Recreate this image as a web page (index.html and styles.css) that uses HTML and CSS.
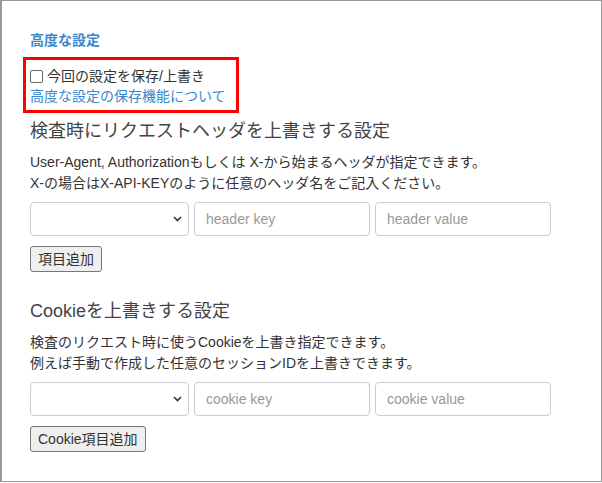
FILE: index.html
```html
<!DOCTYPE html>
<html lang="ja">
<head>
    <meta charset="UTF-8">
    <meta name="viewport" content="width=device-width, initial-scale=1.0">
    <title>高度な設定</title>
    <link rel="stylesheet" href="styles.css">
</head>
<body>

    <div class="panel">
        <div class="adv-title">高度な設定</div>

        <!-- save settings -->
        <div class="save-box">
            <label class="save-check"><input type="checkbox"> 今回の設定を保存/上書き</label>
            <a class="save-help" href="#">高度な設定の保存機能について</a>
        </div>

        <!-- header override -->
        <div class="override">
            <h3>検査時にリクエストヘッダを上書きする設定</h3>
            <p>User-Agent, Authorizationもしくは X-から始まるヘッダが指定できます。<br>X-の場合はX-API-KEYのように任意のヘッダ名をご記入ください。</p>
            <div class="kv-row">
                <div class="select-wrap">
                    <select></select>
                    <svg class="chevron" width="9" height="6" viewBox="0 0 9 6"><path d="M1 1l3.5 3.5L8 1" fill="none" stroke="#333" stroke-width="1.6"/></svg>
                </div>
                <input type="text" placeholder="header key">
                <input type="text" placeholder="header value">
            </div>
            <button class="btn">項目追加</button>
        </div>

        <!-- cookie override -->
        <div class="override cookie">
            <h3>Cookieを上書きする設定</h3>
            <p>検査のリクエスト時に使うCookieを上書き指定できます。<br>例えば手動で作成した任意のセッションIDを上書きできます。</p>
            <div class="kv-row">
                <div class="select-wrap">
                    <select></select>
                    <svg class="chevron" width="9" height="6" viewBox="0 0 9 6"><path d="M1 1l3.5 3.5L8 1" fill="none" stroke="#333" stroke-width="1.6"/></svg>
                </div>
                <input type="text" placeholder="cookie key">
                <input type="text" placeholder="cookie value">
            </div>
            <button class="btn">Cookie項目追加</button>
        </div>
    </div>

</body>
</html>
```

FILE: styles.css
```css
body {
    margin: 0;
    padding: 0;
    background: #fff;
    font-family: "Liberation Sans", "Noto Sans CJK JP", sans-serif;
    font-size: 14px;
    color: #333;
}
.panel {
    width: 602px;
    height: 482px;
    box-sizing: border-box;
    border: 1px solid #999;
    border-left-width: 2px;
    padding: 29px 20px 0 28px;
}
.adv-title {
    font-size: 14px;
    line-height: 20px;
    font-weight: bold;
    color: #3a87cc;
}
.save-box {
    box-sizing: border-box;
    width: 216px;
    height: 56px;
    margin: 7px 0 0 -7px;
    padding: 6px 0 4px 4px;
    border: 3px solid #f00;
}
.save-check {
    display: flex;
    align-items: center;
    gap: 4px;
    line-height: 20px;
    color: #333;
}
.save-check input {
    appearance: none;
    -webkit-appearance: none;
    flex: none;
    box-sizing: border-box;
    width: 13px;
    height: 13px;
    margin: 0;
    border: 1px solid #666;
    border-radius: 2px;
    background: #fff;
}
.save-help {
    display: block;
    line-height: 20px;
    color: #3a87cc;
    text-decoration: none;
}
.override h3 {
    margin: 5px 0 0;
    font-size: 18px;
    line-height: 26px;
    font-weight: normal;
    color: #444;
}
.override p {
    margin: 8px 0 0;
    line-height: 21px;
    color: #333;
}
.override.cookie h3 {
    margin-top: 26px;
}
.kv-row {
    display: flex;
    gap: 5px;
    margin-top: 8px;
    height: 34px;
}
.select-wrap {
    position: relative;
    width: 159px;
}
.select-wrap select {
    appearance: none;
    -webkit-appearance: none;
    width: 100%;
    height: 34px;
    box-sizing: border-box;
    border: 1px solid #ccc;
    border-radius: 4px;
    background: #fff;
}
.chevron {
    position: absolute;
    right: 7px;
    top: 14px;
}
.kv-row input {
    width: 176px;
    height: 34px;
    box-sizing: border-box;
    padding: 0 11px;
    border: 1px solid #ccc;
    border-radius: 4px;
    font-family: "Liberation Sans", "Noto Sans CJK JP", sans-serif;
    font-size: 14px;
    color: #333;
}
.kv-row input::placeholder {
    color: #999;
}
.btn {
    display: block;
    margin-top: 10px;
    height: 26px;
    padding: 0 7px;
    box-sizing: border-box;
    border: 1px solid #777;
    border-radius: 3px;
    background: #efefef;
    font-family: "Liberation Sans", "Noto Sans CJK JP", sans-serif;
    font-size: 14px;
    color: #333;
    line-height: 22px;
}
```
